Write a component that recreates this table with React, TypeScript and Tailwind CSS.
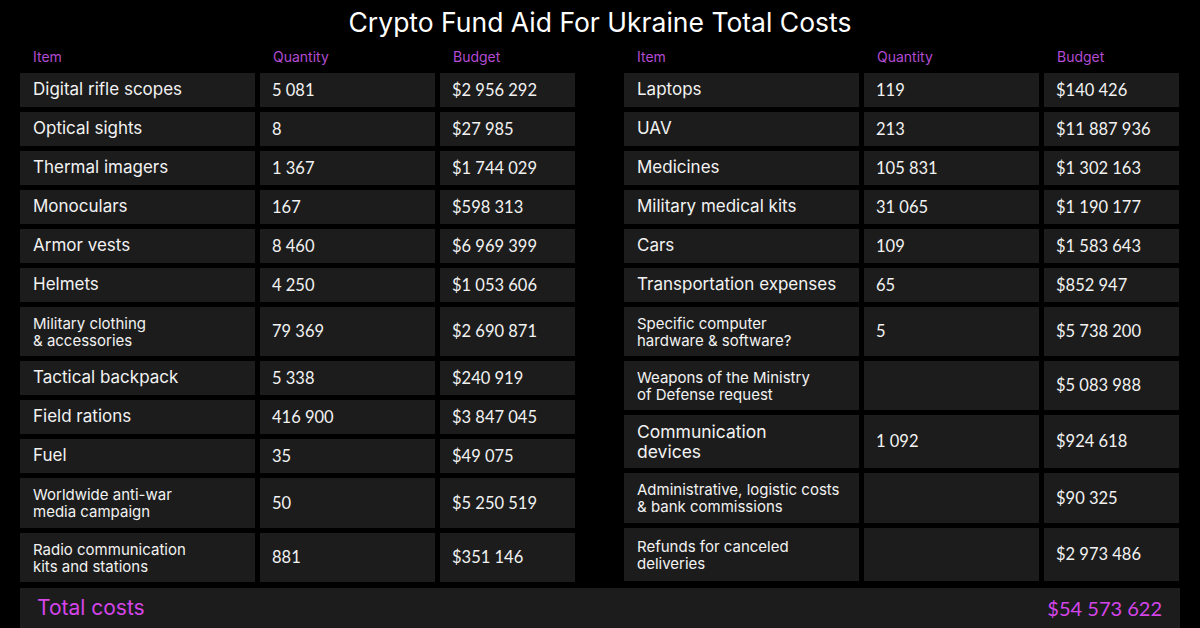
import React from "react";

type Row = { item: string[]; qty: string; budget: string; h: string; big?: boolean };

const left: Row[] = [
  { item: ["Digital rifle scopes"], qty: "5 081", budget: "$2 956 292", h: "h-[34px]" },
  { item: ["Optical sights"], qty: "8", budget: "$27 985", h: "h-[34px]" },
  { item: ["Thermal imagers"], qty: "1 367", budget: "$1 744 029", h: "h-[34px]" },
  { item: ["Monoculars"], qty: "167", budget: "$598 313", h: "h-[34px]" },
  { item: ["Armor vests"], qty: "8 460", budget: "$6 969 399", h: "h-[34px]" },
  { item: ["Helmets"], qty: "4 250", budget: "$1 053 606", h: "h-[34px]" },
  { item: ["Military clothing", "& accessories"], qty: "79 369", budget: "$2 690 871", h: "h-[49px]" },
  { item: ["Tactical backpack"], qty: "5 338", budget: "$240 919", h: "h-[34px]" },
  { item: ["Field rations"], qty: "416 900", budget: "$3 847 045", h: "h-[34px]" },
  { item: ["Fuel"], qty: "35", budget: "$49 075", h: "h-[34px]" },
  { item: ["Worldwide anti-war", "media campaign"], qty: "50", budget: "$5 250 519", h: "h-[50px]" },
  { item: ["Radio communication", "kits and stations"], qty: "881", budget: "$351 146", h: "h-[49px]" },
];

const right: Row[] = [
  { item: ["Laptops"], qty: "119", budget: "$140 426", h: "h-[34px]" },
  { item: ["UAV"], qty: "213", budget: "$11 887 936", h: "h-[34px]" },
  { item: ["Medicines"], qty: "105 831", budget: "$1 302 163", h: "h-[34px]" },
  { item: ["Military medical kits"], qty: "31 065", budget: "$1 190 177", h: "h-[34px]" },
  { item: ["Cars"], qty: "109", budget: "$1 583 643", h: "h-[34px]" },
  { item: ["Transportation expenses"], qty: "65", budget: "$852 947", h: "h-[34px]" },
  { item: ["Specific computer", "hardware & software?"], qty: "5", budget: "$5 738 200", h: "h-[49px]" },
  { item: ["Weapons of the Ministry", "of Defense request"], qty: "", budget: "$5 083 988", h: "h-[49px]" },
  { item: ["Communication", "devices"], qty: "1 092", budget: "$924 618", h: "h-[53px]", big: true },
  { item: ["Administrative, logistic costs", "& bank commissions"], qty: "", budget: "$90 325", h: "h-[50px]" },
  { item: ["Refunds for canceled", "deliveries"], qty: "", budget: "$2 973 486", h: "h-[53px]" },
];

const num = { fontFamily: "Lato, 'Noto Sans', sans-serif" };

function Table({ rows }: { rows: Row[] }) {
  return (
    <div className="w-[555px] flex flex-col">
      <div className="flex h-[21px] items-end text-[14px] text-[#b24cd2]">
        <div className="w-[240px] pl-[13px]">Item</div>
        <div className="w-[180px] pl-[13px]">Quantity</div>
        <div className="pl-[13px]">Budget</div>
      </div>
      <div className="mt-[6px] flex flex-col gap-[5px]">
        {rows.map((r, i) => {
          const multi = r.item.length > 1;
          return (
            <div key={i} className={`flex gap-[5px] ${r.h}`}>
              <div
                className={`w-[235px] bg-[#1c1c1c] pl-[13px] flex flex-col justify-center ${
                  multi ? (r.big ? "text-[17.5px] leading-[20px]" : "text-[15px] leading-[17px]") : "text-[17px]"
                }`}
              >
                {r.item.map((t) => (
                  <span key={t}>{t}</span>
                ))}
              </div>
              <div className="w-[175px] bg-[#1c1c1c] pl-[12px] flex items-center text-[16.5px]" style={num}>
                {r.qty}
              </div>
              <div className="w-[135px] bg-[#1c1c1c] pl-[12px] flex items-center text-[16.5px]" style={num}>
                {r.budget}
              </div>
            </div>
          );
        })}
      </div>
    </div>
  );
}

export default function App() {
  return (
    <div
      className="w-[1200px] h-[628px] overflow-hidden bg-black text-[#f2f2f2] px-[20px]"
      style={{ fontFamily: "Inter, 'Noto Sans', sans-serif" }}
    >
      <h1 className="h-[46px] flex items-center justify-center text-[26.5px] text-white">
        Crypto Fund Aid For Ukraine Total Costs
      </h1>
      <div className="flex items-start gap-[49px]">
        <Table rows={left} />
        <Table rows={right} />
      </div>
      <div className="mt-[6px] h-[40px] bg-[#1c1c1c] flex items-center justify-between pl-[17px] pr-[18px] text-[21px] text-[#d545ea]">
        <span>Total costs</span>
        <span className="text-[20px]" style={num}>
          $54 573 622
        </span>
      </div>
    </div>
  );
}
